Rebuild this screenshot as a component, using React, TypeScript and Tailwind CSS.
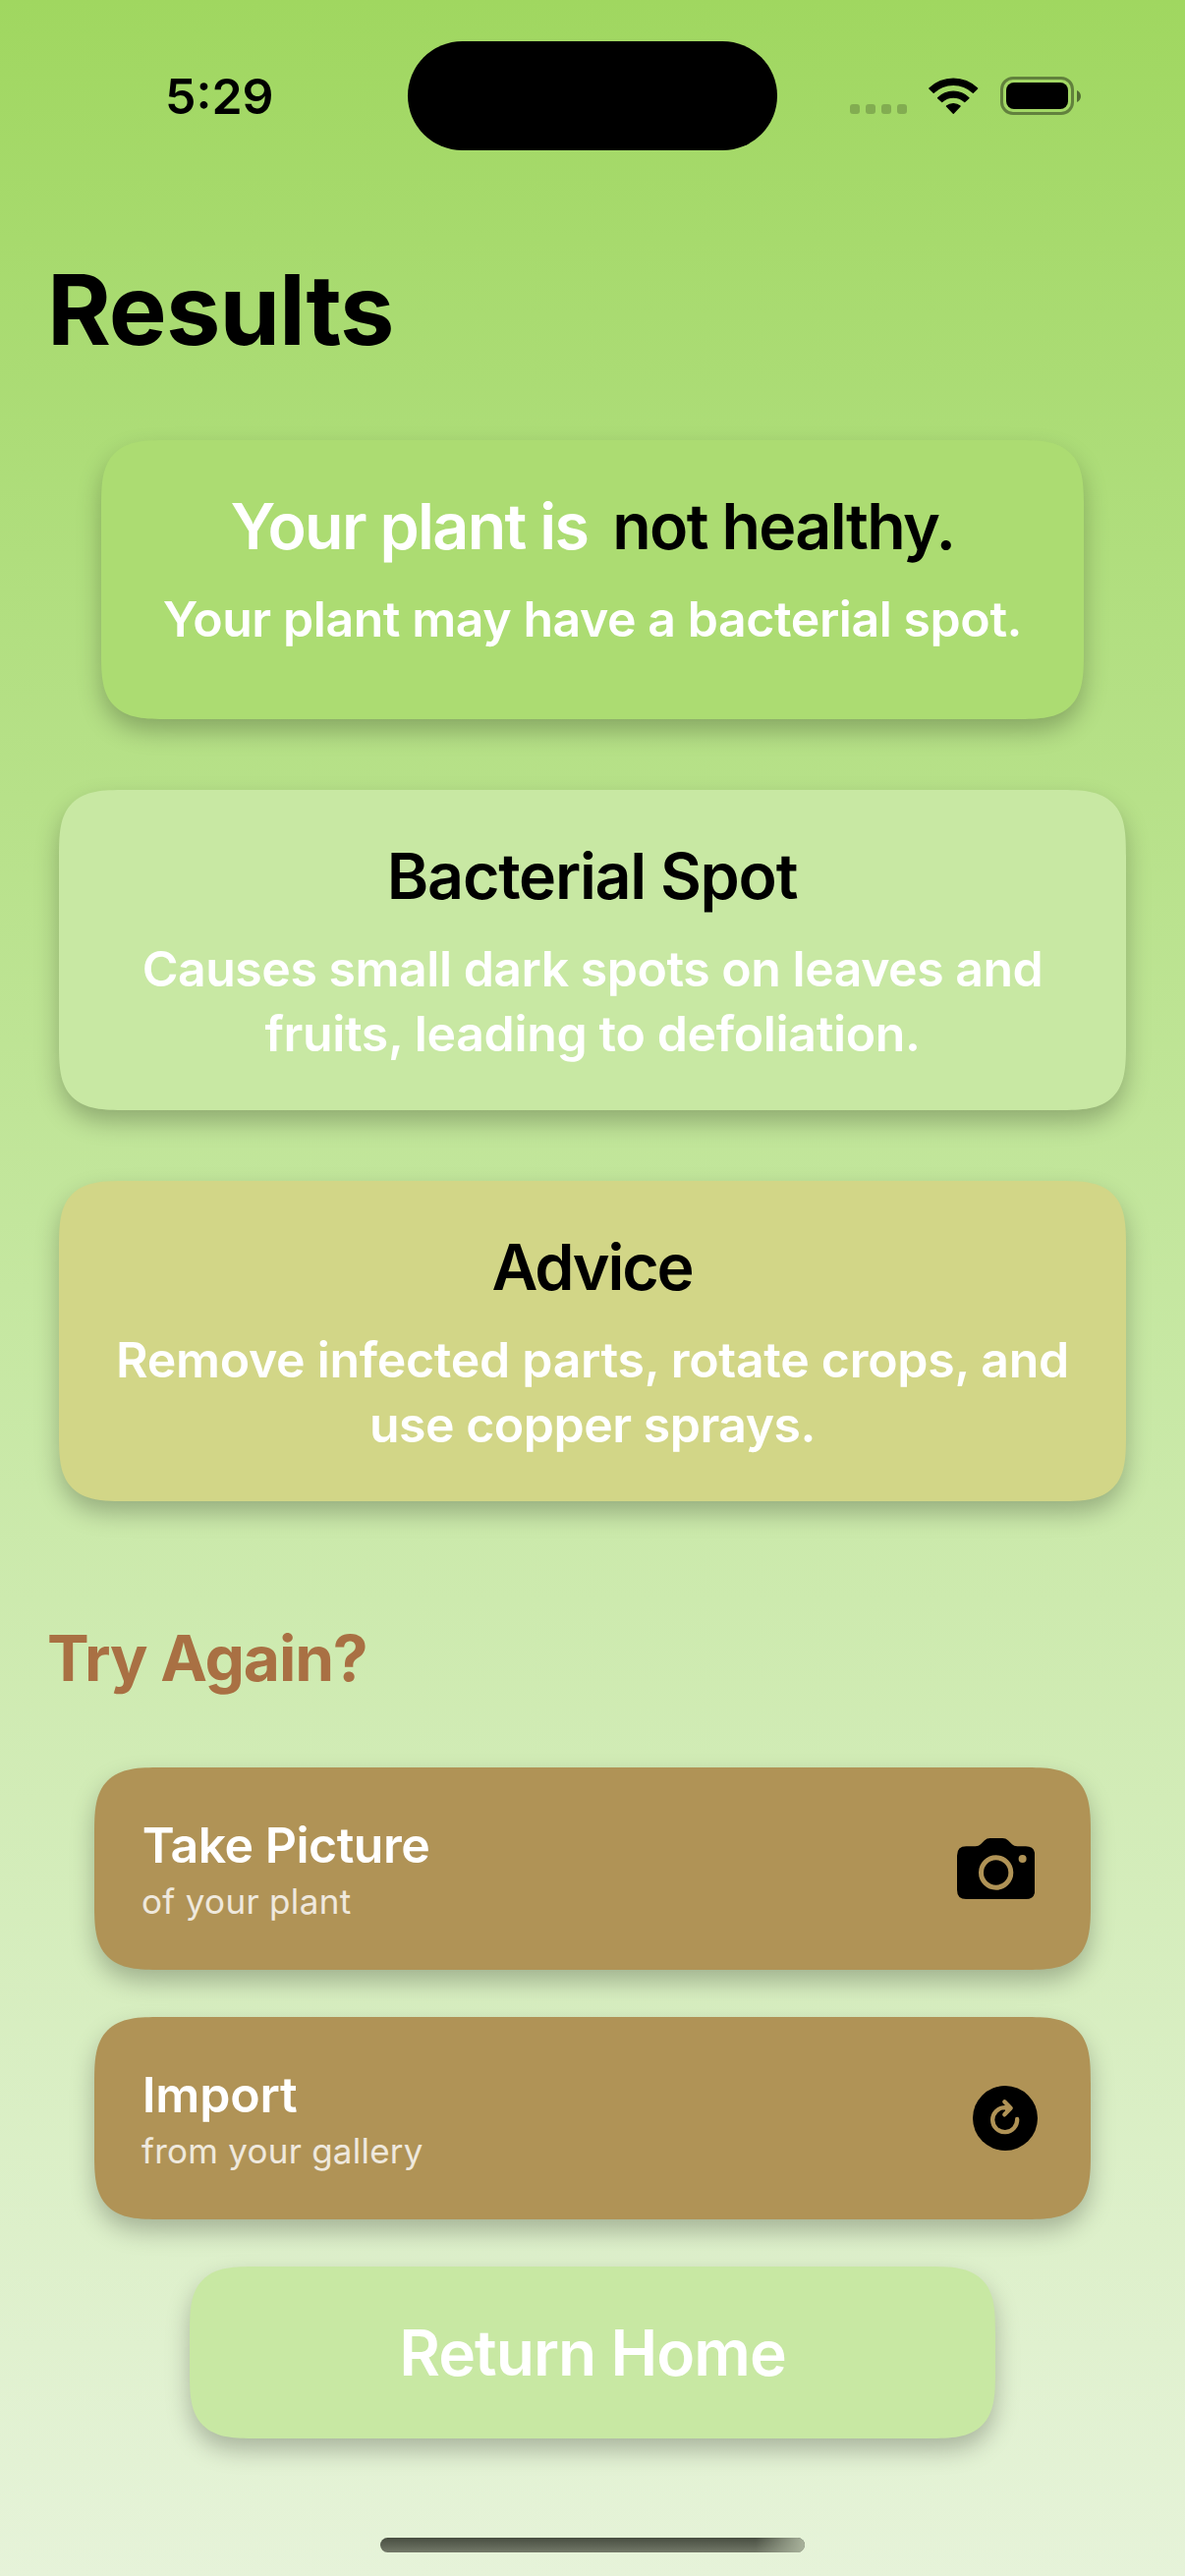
import type { ReactNode } from "react";

// Continuous ("squircle") corners where the browser has them, plain round corners elsewhere.
const surface =
  "rounded-[46px] supports-[corner-shape:squircle]:rounded-[68px] [corner-shape:superellipse(1.65)] shadow-[0_12px_25px_rgba(0,0,0,0.25)]";

function WifiIcon() {
  return (
    <svg viewBox="0 0 151 112" className="h-[37.5px] w-[50.5px] overflow-visible" fill="black" stroke="black" strokeWidth="4" strokeLinejoin="round">
      <path d="M2.5 33A105 105 0 0 1 148.5 33L135.5 45.5A88 88 0 0 0 15.5 45.5Z" />
      <path d="M28.5 62A66 66 0 0 1 122.5 62L110 73.5A50 50 0 0 0 41 73.5Z" />
      <path d="M55 87A32 32 0 0 1 96 87L75.5 108.5Z" />
    </svg>
  );
}

function Battery() {
  return (
    <div className="flex items-center">
      <div className="h-[39px] w-[75px] rounded-[13px] border-[3px] border-black/40 p-[3px]">
        <div className="h-full w-full rounded-[8px] bg-black" />
      </div>
      <svg viewBox="0 0 4 12" className="ml-[3px] h-[12px] w-[4px]">
        <path d="M0 0C5.3 2 5.3 10 0 12Z" fill="black" fillOpacity="0.5" />
      </svg>
    </div>
  );
}

function CameraIcon() {
  return (
    <svg viewBox="0 0 238 186" className="h-[62px] w-[79.3px]">
      <path
        d="M28 25H56Q66 25 72 19L84 7Q91 0 101 0H139Q149 0 156 7L168 19Q174 25 184 25H210Q238 25 238 53V158Q238 186 210 186H28Q0 186 0 158V53Q0 25 28 25Z"
        fill="black"
      />
      <circle cx="119" cy="105" r="45.5" fill="none" stroke="#b09356" strokeWidth="15" />
      <circle cx="200" cy="63" r="12" fill="#b09356" />
    </svg>
  );
}

function ReloadIcon() {
  return (
    <svg viewBox="0 0 198 198" className="size-[66px]" fill="none" stroke="#b09356" strokeWidth="13" strokeLinecap="round" strokeLinejoin="round">
      <circle cx="99" cy="99" r="99" fill="black" stroke="none" />
      <path d="M135.5 102A37.5 37.5 0 1 1 98 66.5L106 67.5" />
      <path d="M97 49L116 68.5L97 88" />
      <path d="M99 55L113 68.5L99 82Z" fill="#b09356" stroke="none" />
    </svg>
  );
}

function InfoCard({ title, className, children }: { title: ReactNode; className: string; children: ReactNode }) {
  return (
    <section className={`flex flex-col items-center pt-[49px] text-center font-semibold ${surface} ${className}`}>
      <h2 className="flex h-[78px] gap-[25px] text-[64.5px] leading-[78px] whitespace-pre text-black">{title}</h2>
      <p className="mt-[22px] text-[50px] leading-[66px] whitespace-nowrap text-white">{children}</p>
    </section>
  );
}

function ActionButton({ title, subtitle, className, icon }: { title: ReactNode; subtitle: ReactNode; className: string; icon: ReactNode }) {
  return (
    <button className={`flex h-[206px] w-[1014px] items-center justify-between bg-[#b09356] pl-[48px] text-left ${surface} ${className}`}>
      <span className="flex flex-col self-start pt-[49px] whitespace-nowrap">
        <span className="ml-[0.7px] text-[50px] leading-[60px] font-semibold text-white">{title}</span>
        <span className="mt-[6px] text-[35px] leading-[43px] text-white/80">{subtitle}</span>
      </span>
      {icon}
    </button>
  );
}

export default function App() {
  return (
    <div className="flex h-[2622px] w-[1206px] flex-col overflow-hidden bg-linear-to-b from-[#a0d760] via-[#c5e7a0] to-[#e6f3d9] font-['Inter',sans-serif] text-black">
      <header className="flex h-[195px] shrink-0 items-start">
        <div className="mt-[68px] ml-[168px] w-[247px] text-[50px] leading-[60px] font-semibold">5:29</div>
        <div className="mt-[41.5px] h-[111px] w-[376px] rounded-full bg-black" />
        <div className="mt-[78px] ml-[74px] flex h-[39px] items-start">
          <div className="mt-[28px] flex gap-[6px]">
            <i className="size-[10px] rounded-[3px] bg-black/20" />
            <i className="size-[10px] rounded-[3px] bg-black/20" />
            <i className="size-[10px] rounded-[3px] bg-black/20" />
            <i className="size-[10px] rounded-[3px] bg-black/20" />
          </div>
          <div className="mt-[0.5px] mr-[22px] ml-[22.3px]">
            <WifiIcon />
          </div>
          <Battery />
        </div>
      </header>

      <h1 className="mt-[60px] ml-[48px] text-[99px] leading-[120px] font-bold tracking-[-0.95px]">Results</h1>

      <main className="mt-[73px] flex flex-col items-center">
        <InfoCard
          className="h-[284px] w-[1000px] bg-[#acdc72]"
          title={
            <>
              <span className="tracking-[-1.65px] text-white">Your plant is</span>
              <span className="tracking-[-1.65px]">not healthy.</span>
            </>
          }
        >
          <span className="tracking-[-0.43px]">Your plant may have a bacterial spot.</span>
        </InfoCard>

        <InfoCard
          className="mt-[72px] h-[326px] w-[1086px] bg-[#c8e8a3]"
          title={<span className="mr-[1px] tracking-[-1.26px]">Bacterial Spot</span>}
        >
          <span className="tracking-[-0.48px]">Causes small dark spots on leaves and</span>
          <br />
          <span className="tracking-[-0.35px]">fruits, leading to defoliation.</span>
        </InfoCard>

        <InfoCard
          className="mt-[72px] h-[326px] w-[1086px] bg-[#d2d687]"
          title={<span className="mr-[1px] tracking-[-2.2px]">Advice</span>}
        >
          <span className="tracking-[-0.28px]">Remove infected parts, rotate crops, and</span>
          <br />
          <span className="tracking-[-0.5px]">use copper sprays.</span>
        </InfoCard>

        <h2 className="mt-[120px] ml-[48px] self-start text-[64px] leading-[80px] font-bold tracking-[-1.12px] text-[#a97043]">
          Try Again?
        </h2>

        <ActionButton
          className="mt-[71px] pr-[56.7px]"
          title={<span className="tracking-[-0.5px]">Take Picture</span>}
          subtitle={<span className="tracking-[0.33px]">of your plant</span>}
          icon={<CameraIcon />}
        />
        <ActionButton
          className="mt-[48px] pr-[54px]"
          title={<span className="tracking-[-0.2px]">Import</span>}
          subtitle={<span className="tracking-[0.24px]">from your gallery</span>}
          icon={<ReloadIcon />}
        />
        <button
          className={`mt-[48px] flex h-[175px] w-[820px] items-center justify-center bg-[#c8e8a3] text-[64px] font-semibold tracking-[-0.95px] text-white ${surface}`}
        >
          Return Home
        </button>

        <div className="mt-[101px] h-[15px] w-[432px] overflow-hidden rounded-full bg-linear-to-b from-[#484e41] to-[#737969]">
          <div className="ml-auto h-full w-[50px] bg-linear-to-r from-[#a9b39c]/0 to-[#a9b39c]" />
        </div>
      </main>
    </div>
  );
}
